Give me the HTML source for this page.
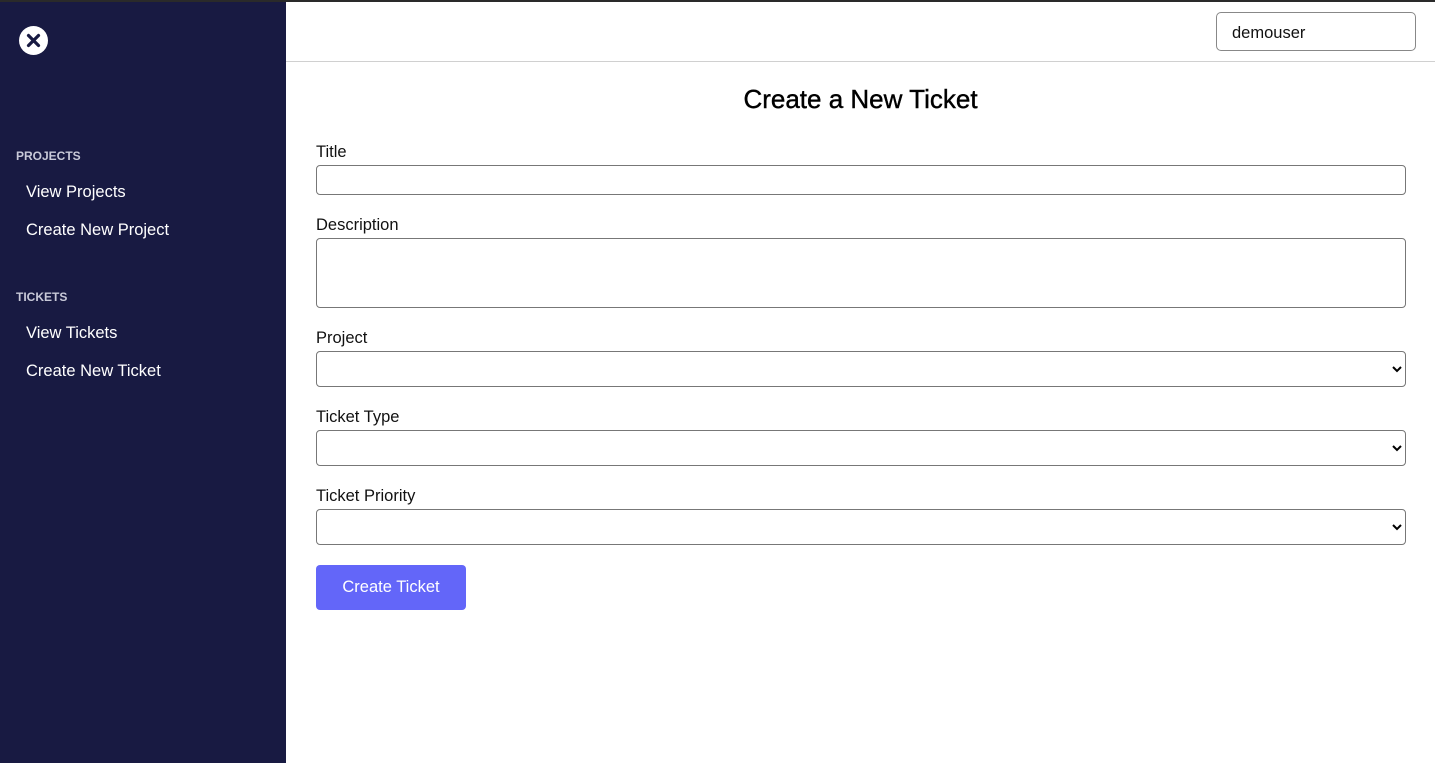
<!DOCTYPE html>
<html><head><style>
*{box-sizing:border-box;margin:0;padding:0}
body{width:1435px;height:763px;overflow:hidden;font-family:"Liberation Sans",sans-serif;background:#fff;position:relative;color:#111}
.top{position:absolute;left:0;top:0;width:1435px;height:2px;background:#2a2a2a}
.side{position:absolute;left:0;top:2px;width:286px;height:761px;background:#181a42;color:#fff}
.x{position:absolute;left:19px;top:24px;width:29px;height:29px;border-radius:50%;background:#fff}
.hd{position:absolute;left:16px;font-size:12px;color:#c8c9d8;font-weight:bold}
.lk{position:absolute;left:26px;font-size:16.5px;color:#fff}
.bar{position:absolute;left:286px;top:61px;width:1149px;height:1px;background:#d0d0d0}
.user{position:absolute;left:1216px;top:12px;width:200px;height:39px;border:1px solid #888;border-radius:5px;font-size:16.5px;padding:11px 15px 0}
h1{position:absolute;left:286px;width:1149px;top:84px;text-align:center;font-size:26px;font-weight:normal;color:#000;-webkit-text-stroke:0.4px #000}
.lb{position:absolute;left:316px;font-size:16.5px}
.in{position:absolute;left:316px;width:1090px;border:1px solid #777;border-radius:4px;background:#fff}
.sel svg{position:absolute;right:3px;top:50%;margin-top:-4px}
.btn{position:absolute;left:316px;top:565px;width:150px;height:45px;background:#6366f9;border-radius:4px;color:#fff;font-size:16.5px;text-align:center;line-height:45px}
</style></head><body>
<div class="top"></div>
<div class="side">
<div class="x"><svg width="29" height="29"><path d="M9.5 9.5L19.5 19.5M19.5 9.5L9.5 19.5" stroke="#181a42" stroke-width="3.2" stroke-linecap="round"/></svg></div>
<div class="hd" style="top:147px">PROJECTS</div>
<div class="lk" style="top:181px">View Projects</div>
<div class="lk" style="top:219px">Create New Project</div>
<div class="hd" style="top:288px">TICKETS</div>
<div class="lk" style="top:322px">View Tickets</div>
<div class="lk" style="top:360px">Create New Ticket</div>
</div>
<div class="user">demouser</div>
<div class="bar"></div>
<h1>Create a New Ticket</h1>
<div class="lb" style="top:143px">Title</div>
<div class="in" style="top:165px;height:30px"></div>
<div class="lb" style="top:216px">Description</div>
<div class="in" style="top:238px;height:70px"></div>
<div class="lb" style="top:329px">Project</div>
<div class="in sel" style="top:351px;height:36px"><svg width="10" height="8"><path d="M1 2L5 6L9 2" stroke="#000" stroke-width="2" fill="none"/></svg></div>
<div class="lb" style="top:408px">Ticket Type</div>
<div class="in sel" style="top:430px;height:36px"><svg width="10" height="8"><path d="M1 2L5 6L9 2" stroke="#000" stroke-width="2" fill="none"/></svg></div>
<div class="lb" style="top:487px">Ticket Priority</div>
<div class="in sel" style="top:509px;height:36px"><svg width="10" height="8"><path d="M1 2L5 6L9 2" stroke="#000" stroke-width="2" fill="none"/></svg></div>
<div class="btn">Create Ticket</div>
</body></html>
